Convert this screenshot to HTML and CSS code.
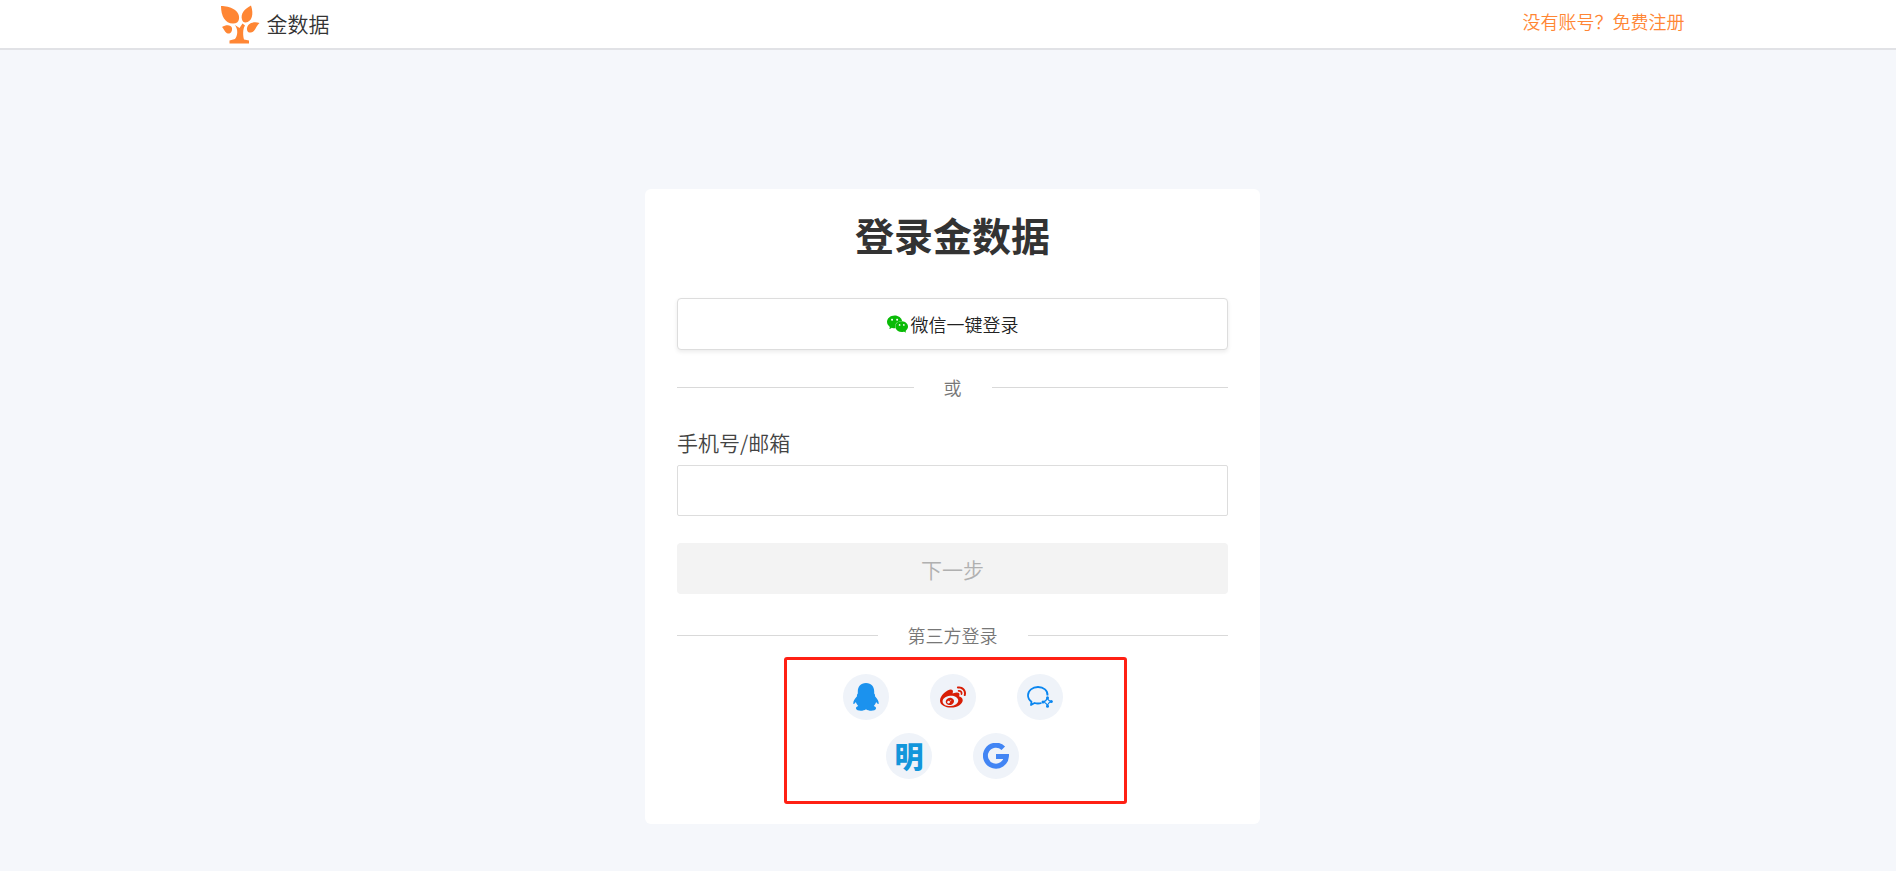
FILE: index.html
```html
<!DOCTYPE html>
<html lang="zh-CN">
<head>
<meta charset="utf-8">
<meta name="viewport" content="width=device-width, initial-scale=1">
<title>登录金数据</title>
<link rel="stylesheet" href="styles.css">
</head>
<body>
<header class="header">
  <div class="header-inner">
    <a class="brand" href="#">
      <svg class="brand-logo" viewBox="0 0 39 39" aria-hidden="true">
        <path d="M0 1C9 1 19 5 18 14C17.500 17 15.500 18.500 12 18.500C4 18.500 0 11 0 1z"/>
        <path d="M30 .5C23 4 19.500 9 21 14.500C21.500 16.500 22.500 17.500 24.500 17.500C31 17 33 9 30 .5z"/>
        <path d="M1 22C5 19.500 10 19.500 11 23C11.500 27 9 29 7 28.500C4 28 3 24 1 22z"/>
        <path d="M38.500 18C33 16 27 18 26 23C25.500 26 27.500 28 30 27.500C34 27 35 21 38.500 18z"/>
        <path d="M14 20L18.500 23L21.500 18.500L24 20.500C21.500 24 22 31 23 34.500L28 35.500V38.500H8.500V35.500L14 34C16.500 31 17.500 25 14 20z"/>
      </svg>
      <span class="brand-name">金数据</span>
    </a>
    <a class="signup" href="#">没有账号？免费注册</a>
  </div>
</header>
<main class="main">
  <section class="card">
    <h1 class="title">登录金数据</h1>
    <button class="wechat" type="button">
      <svg class="wechat-icon" viewBox="0 2 24 20" aria-hidden="true"><path d="M8.691 2.188C3.891 2.188 0 5.476 0 9.53c0 2.212 1.17 4.203 3.002 5.55a.59.59 0 0 1 .213.665l-.39 1.48c-.019.07-.048.141-.048.213 0 .163.13.295.29.295a.326.326 0 0 0 .167-.054l1.903-1.114a.864.864 0 0 1 .717-.098 10.16 10.16 0 0 0 2.837.403c.276 0 .543-.027.811-.05-.857-2.578.157-4.972 1.932-6.446 1.703-1.415 3.882-1.98 5.853-1.838-.576-3.583-4.196-6.348-8.596-6.348zM5.785 5.991c.642 0 1.162.529 1.162 1.18a1.17 1.17 0 0 1-1.162 1.178A1.17 1.17 0 0 1 4.623 7.17c0-.651.52-1.18 1.162-1.18zm5.813 0c.642 0 1.162.529 1.162 1.18a1.17 1.17 0 0 1-1.162 1.178 1.17 1.17 0 0 1-1.162-1.178c0-.651.52-1.18 1.162-1.18zm5.34 2.867c-1.797-.052-3.746.512-5.28 1.786-1.72 1.428-2.687 3.72-1.78 6.22.942 2.453 3.666 4.229 6.884 4.229.826 0 1.622-.12 2.361-.336a.722.722 0 0 1 .598.082l1.584.926a.272.272 0 0 0 .14.047c.134 0 .24-.111.24-.247 0-.06-.023-.12-.038-.177l-.327-1.233a.582.582 0 0 1-.023-.156.49.49 0 0 1 .201-.398C23.024 18.48 24 16.82 24 14.98c0-3.21-2.931-5.837-6.656-6.088V8.89c-.135-.01-.27-.027-.407-.03zm-2.53 3.274c.535 0 .969.44.969.982a.976.976 0 0 1-.969.983.976.976 0 0 1-.969-.983c0-.542.434-.982.97-.982zm4.844 0c.535 0 .969.44.969.982a.976.976 0 0 1-.969.983.976.976 0 0 1-.969-.983c0-.542.434-.982.969-.982z"/></svg>
      <span>微信一键登录</span>
    </button>
    <div class="divider">或</div>
    <form class="form">
      <label class="label" for="account">手机号/邮箱</label>
      <input class="input" id="account" type="text">
      <button class="next" type="submit" disabled>下一步</button>
    </form>
    <div class="divider divider-social">第三方登录</div>
    <div class="social">
      <div class="social-row">
        <button class="social-button" type="button" aria-label="QQ">
          <svg width="26" height="28" viewBox="0 0 26 28" fill="#1b92ee"><path d="M13 0C7.500 0 4.800 4 4.800 8.500V10.500C3.800 11.500 3.900 12.500 4 13.200C1.500 15.800 .3 18 .3 20.200C.4 21.600 1 21.500 2.800 19C3.200 20.500 4 21.800 5.200 22.900C3.500 23.500 2.800 24.500 3 25.500C3.500 28.300 10.500 28.300 13 26.200C15.500 28.300 22.500 28.300 23 25.500C23.200 24.500 22.500 23.500 20.800 22.900C22 21.800 22.800 20.500 23.200 19C25 21.500 25.600 21.600 25.700 20.200C25.700 18 24.500 15.800 22 13.200C22.100 12.500 22.200 11.500 21.200 10.500V8.500C21.200 4 18.500 0 13 0z"/></svg>
        </button>
        <button class="social-button" type="button" aria-label="微博">
          <svg width="26" height="26" viewBox="0 0 24 24" fill="#d81e06"><path d="M10.098 20.323c-3.977.391-7.414-1.406-7.672-4.02-.259-2.609 2.759-5.047 6.74-5.441 3.979-.394 7.413 1.404 7.671 4.018.259 2.6-2.759 5.049-6.737 5.439l-.002.004zM9.05 17.219c-.384.616-1.208.884-1.829.602-.612-.279-.793-.991-.406-1.593.379-.595 1.176-.861 1.793-.601.622.263.82.972.442 1.592zm1.27-1.627c-.141.237-.449.353-.689.253-.236-.09-.313-.361-.177-.586.138-.227.436-.346.672-.24.239.09.315.36.18.601l.014-.028zm.176-2.719c-1.893-.493-4.033.45-4.857 2.118-.836 1.704-.026 3.591 1.886 4.21 1.983.64 4.318-.341 5.132-2.179.8-1.793-.201-3.642-2.161-4.149zm7.563-1.224c-.346-.105-.57-.18-.405-.615.375-.977.42-1.804 0-2.404-.781-1.112-2.915-1.053-5.364-.03 0 0-.766.331-.571-.271.376-1.217.315-2.224-.27-2.809-1.338-1.337-4.869.045-7.888 3.08C1.309 10.87 0 13.273 0 15.348c0 3.981 5.099 6.395 10.086 6.395 6.536 0 10.888-3.801 10.888-6.82 0-1.822-1.547-2.854-2.915-3.284v.01zm1.908-5.092c-.766-.856-1.908-1.187-2.96-.962-.436.09-.706.511-.616.932.09.42.511.691.932.602.511-.105 1.067.044 1.442.465.376.421.466.977.316 1.473-.136.406.089.856.51.992.405.119.857-.105.992-.512.33-1.021.12-2.178-.646-3.035l.03.045zm2.418-2.195c-1.576-1.757-3.905-2.419-6.054-1.968-.496.104-.812.587-.706 1.081.104.496.586.813 1.082.707 1.532-.331 3.185.15 4.296 1.383 1.112 1.246 1.429 2.943.947 4.416-.165.48.106 1.007.586 1.157.479.165.991-.104 1.157-.586.675-2.088.241-4.478-1.338-6.235l.03.045z"/></svg>
        </button>
        <button class="social-button" type="button" aria-label="企业微信">
          <svg width="26" height="22" viewBox="0 0 26 22" fill="none" stroke="#0a86f0" stroke-width="1.800" stroke-linejoin="round"><path d="M20.500 9.500C21 4.500 16.500 1 11 1C5.500 1 1 4.500 1 9.200C1 12 2.500 14.300 4.500 15.700L4 19L7.500 17C9.700 17.700 12 17.700 14.500 17"/><path d="M20.500 11.800Q20.800 14.800 24.500 15.500Q21 16.300 20.500 20.200Q19.500 16.500 16 16Q19.500 15 20.500 11.800z" stroke-width="1.200"/><g fill="#0a86f0" stroke="none"><circle cx="20.500" cy="11.800" r="1.500"/><circle cx="24.300" cy="15.500" r="1.500"/><circle cx="20.500" cy="20.200" r="1.500"/><circle cx="16" cy="16" r="1.500"/></g></svg>
        </button>
      </div>
      <div class="social-row">
        <button class="social-button mingdao" type="button" aria-label="明道">明</button>
        <button class="social-button" type="button" aria-label="Google">
          <svg width="26" height="26" viewBox="0 0 26 26" fill="none" stroke="#4285f4" stroke-width="5"><path d="M20.300 5.200A10.500 10.500 0 1 0 23.400 13.500H13"/></svg>
        </button>
      </div>
      <div class="highlight" aria-hidden="true"></div>
    </div>
  </section>
</main>
</body>
</html>
```
FILE: styles.css
```css
* { box-sizing: border-box; }
body {
  margin: 0;
  min-height: 100vh;
  background: #f5f7fb;
  color: #333;
  font-family: "Noto Sans CJK SC", sans-serif;
  font-weight: 350;
  font-size: 18px;
  line-height: 24px;
}
button, input { font: inherit; margin: 0; }
button { cursor: pointer; }
button:disabled { cursor: default; }
a { text-decoration: none; }
.header {
  padding-left: 9px;
  background: #fff;
  border-bottom: 2px solid #e1e2e6;
}
.header-inner {
  display: flex;
  align-items: center;
  justify-content: space-between;
  max-width: 1464px;
  height: 48px;
  margin: 0 auto;
}
.brand {
  display: flex;
  align-items: center;
  gap: 7px;
  color: #333;
  font-size: 21px;
}
.brand-logo { width: 39px; height: 39px; fill: #ff8634; }
.brand-name { padding-bottom: 3px; }
.signup { color: #ff8634; padding-bottom: 6px; }
.main {
  display: flex;
  justify-content: center;
  padding: 139px 0 47px 9px;
}
.card {
  width: 100%;
  max-width: 615px;
  padding: 17px 32px 45px;
  background: #fff;
  border-radius: 6px;
}
.title {
  margin: 0 0 36px;
  font-size: 39px;
  line-height: 56px;
  font-weight: 700;
  text-align: center;
}
.wechat {
  display: flex;
  align-items: center;
  justify-content: center;
  gap: 3px;
  width: 100%;
  height: 52px;
  color: #222;
  background: #fff;
  border: 1px solid #ddd;
  border-radius: 4px;
  box-shadow: 0 2px 4px rgba(0, 0, 0, .08);
}
.wechat-icon { width: 21px; height: 18px; fill: #09bb07; }
.divider {
  display: flex;
  align-items: center;
  gap: 30px;
  margin-top: 25px;
  color: #777;
}
.divider::before, .divider::after {
  content: "";
  flex: 1;
  height: 1px;
  background: #d9d9d9;
}
.form { display: flex; flex-direction: column; }
.label {
  margin: 28px 0 8px;
  align-self: flex-start;
  color: #444;
  font-size: 21px;
  line-height: 30px;
}
.input {
  height: 51px;
  padding: 0 12px;
  background: #fff;
  border: 1px solid #ddd;
  border-radius: 2px;
}
.next {
  height: 51px;
  margin-top: 27px;
  color: #b0b0b0;
  font-size: 21px;
  background: #f3f3f3;
  border: 0;
  border-radius: 4px;
}
.divider-social { margin-top: 29px; }
.social {
  position: relative;
  display: flex;
  flex-direction: column;
  gap: 13px;
  margin-top: 27px;
}
.social-row { display: flex; justify-content: center; gap: 41px; }
.social-button {
  display: flex;
  align-items: center;
  justify-content: center;
  width: 46px;
  height: 46px;
  padding: 0;
  background: #eff3f9;
  border: 0;
  border-radius: 50%;
}
.mingdao {
  padding-bottom: 3px;
  color: #1296db;
  font-size: 29px;
  font-weight: 900;
  line-height: 28px;
}
.highlight {
  position: absolute;
  top: -17px;
  bottom: -25px;
  left: 50%;
  width: 343px;
  margin-left: -169px;
  border: 3px solid #ff2014;
  border-radius: 3px;
  pointer-events: none;
}
```
